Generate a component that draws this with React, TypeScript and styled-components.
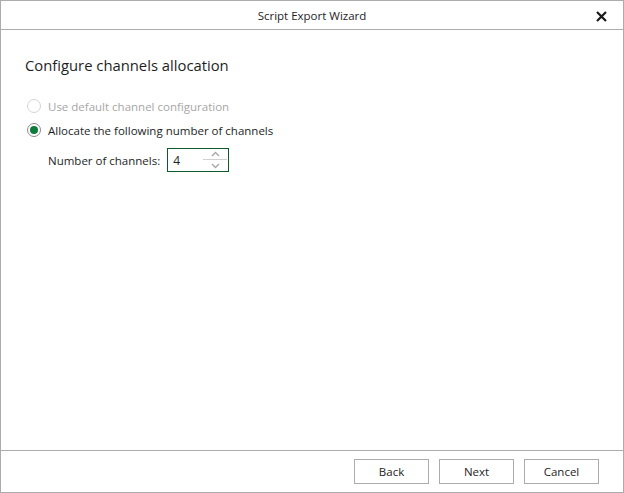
import styled, { createGlobalStyle } from 'styled-components'

const GlobalStyle = createGlobalStyle`
    html, body {
        margin: 0;
        padding: 0;
        background: #ffffff;
    }
    body {
        font-family: "Open Sans", "Noto Sans", "Liberation Sans", sans-serif;
        color: #1e1e1e;
    }
`

const Window = styled.div`
    width: 624px;
    height: 493px;
    box-sizing: border-box;
    border: 1px solid #acacac;
    display: flex;
    flex-direction: column;
    background: #ffffff;
`

const TitleBar = styled.div`
    height: 28px;
    flex: none;
    border-bottom: 1px solid #acacac;
    display: flex;
    align-items: center;
    justify-content: center;
    position: relative;
    font-size: 11.5px;
    color: #1e1e1e;
`

const CloseButton = styled.button`
    position: absolute;
    right: 14px;
    top: 7px;
    width: 16px;
    height: 16px;
    padding: 0;
    border: none;
    background: none;
    display: flex;
    align-items: center;
    justify-content: center;
`

const Body = styled.div`
    flex: 1;
    padding: 25px 24px 0 24px;
`

const Heading = styled.h1`
    margin: 0 0 19px 0;
    font-size: 14.8px;
    font-weight: 400;
    color: #1e1e1e;
`

const OptionRow = styled.label<{ disabled?: boolean }>`
    display: flex;
    align-items: center;
    gap: 7px;
    height: 24px;
    font-size: 11.5px;
    color: ${p => p.disabled ? '#a6a6a6' : '#1e1e1e'};
`

const RadioCircle = styled.span<{ checked?: boolean, disabled?: boolean }>`
    width: 14px;
    height: 14px;
    box-sizing: border-box;
    border-radius: 50%;
    border: 1px solid ${p => p.disabled ? '#d4d4d4' : '#8a8a8a'};
    display: flex;
    align-items: center;
    justify-content: center;
    flex: none;
    margin-left: 2px;
    &::after {
        content: '';
        display: ${p => p.checked ? 'block' : 'none'};
        width: 8px;
        height: 8px;
        border-radius: 50%;
        background: #0f7b3a;
    }
`

const CountRow = styled.div`
    display: flex;
    align-items: center;
    gap: 7px;
    margin-top: 6px;
    padding-left: 23px;
    font-size: 11.5px;
`

const SpinBox = styled.div`
    width: 62px;
    height: 24px;
    box-sizing: border-box;
    border: 1px solid #0f5a2a;
    display: flex;
    align-items: center;
    padding-left: 5px;
    font-size: 12px;
`

const SpinValue = styled.span`
    flex: 1;
`

const SpinArrows = styled.div`
    width: 24px;
    display: flex;
    flex-direction: column;
    align-items: center;
    height: 22px;
    margin-right: 1px;
`

const SpinHalf = styled.div<{ top?: boolean }>`
    height: 11px;
    width: 100%;
    display: flex;
    align-items: center;
    justify-content: center;
    box-sizing: border-box;
    border-bottom: ${p => p.top ? '1px solid #d0d0d0' : 'none'};
`

const Footer = styled.div`
    height: 41px;
    flex: none;
    border-top: 1px solid #acacac;
    display: flex;
    align-items: center;
    justify-content: flex-end;
    gap: 10px;
    padding-right: 24px;
`

const FooterButton = styled.button`
    width: 75px;
    height: 25px;
    box-sizing: border-box;
    border: 1px solid #acacac;
    background: #ffffff;
    font-family: "Open Sans", "Noto Sans", "Liberation Sans", sans-serif;
    font-size: 11.5px;
    color: #1e1e1e;
    padding: 0;
`

const Chevron = ({ up }: { up?: boolean }) =>
    <svg width="9" height="6" viewBox="0 0 9 6">
        <polyline
            points={up ? '1,5 4.5,1.5 8,5' : '1,1 4.5,4.5 8,1'}
            fill="none"
            stroke="#a8a8a8"
            strokeWidth="1.4"
        />
    </svg>

const App = () => {
    return <>
        <GlobalStyle/>
        <Window>
            <TitleBar>
                Script Export Wizard
                <CloseButton>
                    <svg width="11" height="11" viewBox="0 0 11 11">
                        <path d="M1 1 L10 10 M10 1 L1 10" stroke="#1a1a1a" strokeWidth="2.2"/>
                    </svg>
                </CloseButton>
            </TitleBar>
            <Body>
                <Heading>Configure channels allocation</Heading>
                <OptionRow disabled>
                    <RadioCircle disabled/>
                    Use default channel configuration
                </OptionRow>
                <OptionRow>
                    <RadioCircle checked/>
                    Allocate the following number of channels
                </OptionRow>
                <CountRow>
                    Number of channels:
                    <SpinBox>
                        <SpinValue>4</SpinValue>
                        <SpinArrows>
                            <SpinHalf top><Chevron up/></SpinHalf>
                            <SpinHalf><Chevron/></SpinHalf>
                        </SpinArrows>
                    </SpinBox>
                </CountRow>
            </Body>
            <Footer>
                <FooterButton>Back</FooterButton>
                <FooterButton>Next</FooterButton>
                <FooterButton>Cancel</FooterButton>
            </Footer>
        </Window>
    </>
}

export default App
